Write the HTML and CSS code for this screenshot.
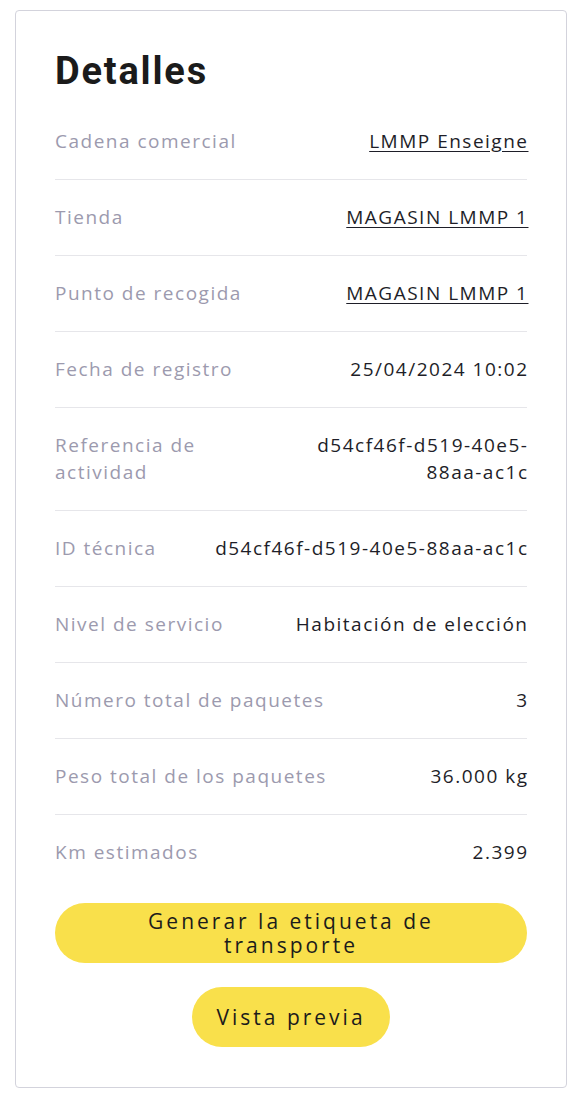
FILE: index.html
```html
<!DOCTYPE html>
<html lang="es">
<head>
    <meta charset="UTF-8">
    <meta name="viewport" content="width=device-width, initial-scale=1.0">
    <title>Detalles</title>
    <link rel="stylesheet" href="styles.css">
</head>
<body>
    <div class="card">
        <h1>Detalles</h1>

        <div class="details">
            <div class="row">
                <span class="label">Cadena comercial</span>
                <a class="value link" href="#">LMMP Enseigne</a>
            </div>
            <div class="row">
                <span class="label">Tienda</span>
                <a class="value link" href="#">MAGASIN LMMP 1</a>
            </div>
            <div class="row">
                <span class="label">Punto de recogida</span>
                <a class="value link" href="#">MAGASIN LMMP 1</a>
            </div>
            <div class="row">
                <span class="label">Fecha de registro</span>
                <span class="value">25/04/2024 10:02</span>
            </div>
            <div class="row">
                <span class="label">Referencia de actividad</span>
                <span class="value">d54cf46f-d519-40e5-88aa-ac1c</span>
            </div>
            <div class="row">
                <span class="label">ID técnica</span>
                <span class="value">d54cf46f-d519-40e5-88aa-ac1c</span>
            </div>
            <div class="row">
                <span class="label">Nivel de servicio</span>
                <span class="value">Habitación de elección</span>
            </div>
            <div class="row">
                <span class="label">Número total de paquetes</span>
                <span class="value">3</span>
            </div>
            <div class="row">
                <span class="label">Peso total de los paquetes</span>
                <span class="value">36.000 kg</span>
            </div>
            <div class="row">
                <span class="label">Km estimados</span>
                <span class="value">2.399</span>
            </div>
        </div>

        <div class="actions">
            <button class="btn btn-wide">Generar la etiqueta de transporte</button>
            <button class="btn">Vista previa</button>
        </div>
    </div>
</body>
</html>
```

FILE: styles.css
```css
:root {
    --yellow: #f9e04b;
    --text-color: #1e1e28;
    --muted: #9c9aae;
    --line: #e6e6ea;
    --border: #d3d3dc;
}

body {
    margin: 0;
    padding: 10px 10px 10px 15px;
    background-color: #ffffff;
    font-family: 'Open Sans', 'Liberation Sans', sans-serif;
    color: var(--text-color);
}

.card {
    width: 472px;
    padding: 40px 39px 40px 39px;
    border: 1px solid var(--border);
    border-radius: 4px;
}

h1 {
    font-family: Roboto, sans-serif;
    font-weight: 700;
    font-size: 38px;
    line-height: 40px;
    letter-spacing: 1.8px;
    margin: 0 0 13px 0;
    color: #1b1b1b;
}

.row {
    display: flex;
    justify-content: space-between;
    align-items: flex-start;
    gap: 16px;
    padding: 24px 0;
    font-size: 19px;
    line-height: 27px;
    letter-spacing: 1.5px;
    border-bottom: 1px solid var(--line);
}

.row:last-child {
    border-bottom: none;
}

.label {
    color: var(--muted);
}

.value {
    text-align: right;
    margin-right: -1.5px;
    color: var(--text-color);
}

.link {
    text-decoration: underline;
    text-underline-offset: 3px;
}

.actions {
    display: flex;
    flex-direction: column;
    align-items: center;
    gap: 24px;
    margin-top: 13px;
}

.btn {
    min-height: 60px;
    padding: 6px 24px;
    border: none;
    border-radius: 30px;
    background-color: var(--yellow);
    color: #1b1b1b;
    font-family: 'Open Sans', 'Liberation Sans', sans-serif;
    font-size: 21px;
    line-height: 24px;
    letter-spacing: 3px;
    cursor: pointer;
}

.btn-wide {
    width: 100%;
    padding: 6px 40px;
}
```
